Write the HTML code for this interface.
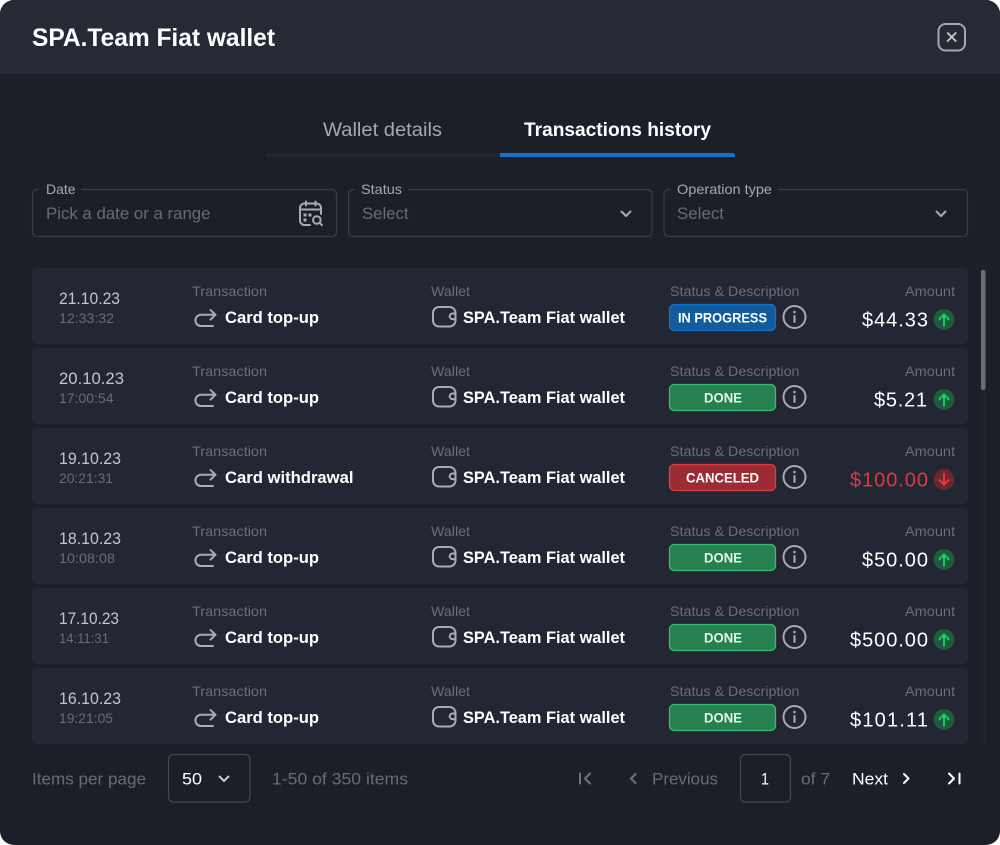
<!DOCTYPE html>
<html lang="en"><head><meta charset="utf-8"><title>SPA.Team Fiat wallet</title>
<style>
html,body{margin:0;padding:0;background:#fff;width:1000px;height:845px;overflow:hidden}
svg{display:block}
text{font-family:"Liberation Sans",sans-serif;font-size:16px}
.b{font-weight:700}
.lab{font-size:14px;fill:#6b6e77}
.date{font-size:16.5px;fill:#c3c5ca}
.time{font-size:14px;fill:#696c75}
.main{font-size:17px;font-weight:700;fill:#fff}
.badge{font-size:14px;font-weight:700;fill:#fff}
.amt{font-size:20px;fill:#fff}
.ph{font-size:17px;fill:#686b74}
.fl{font-size:14px;fill:#a5a8af}
.ft{font-size:17px;fill:#686b74}
.ic{fill:none;stroke:#a8abb2;stroke-width:2;stroke-linecap:round;stroke-linejoin:round}
</style></head><body>
<svg width="1000" height="845" viewBox="0 0 1000 845" xmlns="http://www.w3.org/2000/svg">
<defs>
<g id="tr"><path class="ic" d="M213 326H201a5.5 5.500 0 0 1 0-11.200H215.500M210.500 310l5 4.800-5 4.800"/></g>
<g id="wa"><rect class="ic" x="433" y="307" width="22.500" height="19.500" rx="6"/><path class="ic" d="M455.500 313.500h-3a2.800 2.800 0 0 0 0 5.600h3"/></g>
<g id="inf"><circle class="ic" cx="794.500" cy="317" r="11"/><circle cx="794.500" cy="312" r="1.300" fill="#a8abb2"/><path class="ic" d="M794.500 316v6"/></g>
<g id="up"><circle cx="944" cy="319.500" r="10.500" fill="#1f5b3e"/><path d="M944 325.500v-11M939.500 319l4.500-4.500 4.500 4.500" fill="none" stroke="#22c565" stroke-width="2" stroke-linecap="round" stroke-linejoin="round"/></g>
<g id="dn"><circle cx="944" cy="319.500" r="10.500" fill="#6b2630"/><path d="M944 313.500v11M939.500 320l4.500 4.500 4.500-4.500" fill="none" stroke="#e5383f" stroke-width="2" stroke-linecap="round" stroke-linejoin="round"/></g>
</defs>
<path d="M14 0H986A14 14 0 0 1 1000 14V831A14 14 0 0 1 986 845H14A14 14 0 0 1 0 831V14A14 14 0 0 1 14 0Z" fill="#1c1f27"/>
<path d="M14 0H986A14 14 0 0 1 1000 14V74H0V14A14 14 0 0 1 14 0Z" fill="#252a35"/>
<text x="32" y="46" class="b" style="font-size:25px" fill="#fff" textLength="243" lengthAdjust="spacingAndGlyphs">SPA.Team Fiat wallet</text>
<rect x="938.500" y="24" width="26.500" height="26.500" rx="7" fill="none" stroke="#a3a6ae" stroke-width="2"/>
<path d="M947.700 33l8 8M955.700 33l-8 8" stroke="#c6c8cd" stroke-width="1.800" stroke-linecap="round"/>

<text x="323" y="136" style="font-size:19px" fill="#a5a8ae" textLength="119" lengthAdjust="spacingAndGlyphs">Wallet details</text>
<text x="524" y="136" class="b" style="font-size:19px" fill="#fff" textLength="187" lengthAdjust="spacingAndGlyphs">Transactions history</text>
<path d="M268 153H500V157H266Q266 153 268 153Z" fill="#22262f"/>
<path d="M500 153H733Q735 153 735 157H500Z" fill="#1272cc"/>

<g fill="none" stroke="#3a3e48" stroke-width="1.200">
<path d="M39 189.500H37A4.500 4.500 0 0 0 32.500 194V232A4.500 4.500 0 0 0 37 236.500H332A4.500 4.500 0 0 0 336.500 232V194A4.500 4.500 0 0 0 332 189.500H81"/>
<path d="M355 189.500H353A4.500 4.500 0 0 0 348.500 194V232A4.500 4.500 0 0 0 353 236.500H647.500A4.500 4.500 0 0 0 652 232V194A4.500 4.500 0 0 0 647.500 189.500H408"/>
<path d="M671 189.500H668.500A4.500 4.500 0 0 0 664 194V232A4.500 4.500 0 0 0 668.500 236.500H963A4.500 4.500 0 0 0 967.500 232V194A4.500 4.500 0 0 0 963 189.500H778"/>
</g>
<text x="46" y="194" class="fl" textLength="29.500" lengthAdjust="spacingAndGlyphs">Date</text>
<text x="361" y="194" class="fl" textLength="41" lengthAdjust="spacingAndGlyphs">Status</text>
<text x="677" y="194" class="fl" textLength="95" lengthAdjust="spacingAndGlyphs">Operation type</text>
<text x="46" y="219" class="ph" textLength="164.500" lengthAdjust="spacingAndGlyphs">Pick a date or a range</text>
<text x="362" y="219" class="ph" textLength="46.500" lengthAdjust="spacingAndGlyphs">Select</text>
<text x="677" y="219" class="ph" textLength="47" lengthAdjust="spacingAndGlyphs">Select</text>
<path class="ic" d="M621.500 211.500l4.500 4.500 4.500-4.500M936.500 211.500l4.500 4.500 4.500-4.500"/>
<path class="ic" d="M310 225h-5.500a4.500 4.500 0 0 1-4.500-4.500v-12.500a4.500 4.500 0 0 1 4.500-4.500h12a4.500 4.500 0 0 1 4.500 4.500v6M306 201.500v4M315.500 201.500v4M300 209.500h21"/>
<path d="M303.500 213.500h3v3h-3zM303.500 218.500h3v3h-3zM308.500 213.500h3v3h-3z" fill="#a8abb2"/>
<circle class="ic" cx="316.800" cy="220" r="3.800"/><path class="ic" d="M319.600 222.800l2.400 2.400"/>

<rect x="980.500" y="268" width="5.500" height="476" rx="2.500" fill="#20232c"/>
<rect x="981" y="270" width="4.500" height="120" rx="2" fill="#6a6d76"/>

<!-- rows -->
<rect x="32" y="268" width="936" height="76" rx="6" fill="#232733"/>
<rect x="32" y="348" width="936" height="76" rx="6" fill="#232733"/>
<rect x="32" y="428" width="936" height="76" rx="6" fill="#232733"/>
<rect x="32" y="508" width="936" height="76" rx="6" fill="#232733"/>
<rect x="32" y="588" width="936" height="76" rx="6" fill="#232733"/>
<rect x="32" y="668" width="936" height="76" rx="6" fill="#232733"/>

<!-- row 1 -->
<text x="59" y="304" class="date" textLength="61" lengthAdjust="spacingAndGlyphs">21.10.23</text>
<text x="59" y="323" class="time" textLength="55" lengthAdjust="spacingAndGlyphs">12:33:32</text>
<text x="192" y="296" class="lab" textLength="75" lengthAdjust="spacingAndGlyphs">Transaction</text>
<use href="#tr"/>
<text x="225" y="323" class="main" textLength="94" lengthAdjust="spacingAndGlyphs">Card top-up</text>
<text x="431" y="296" class="lab" textLength="39" lengthAdjust="spacingAndGlyphs">Wallet</text>
<use href="#wa"/>
<text x="463" y="323" class="main" textLength="162" lengthAdjust="spacingAndGlyphs">SPA.Team Fiat wallet</text>
<text x="670" y="296" class="lab" textLength="129.500" lengthAdjust="spacingAndGlyphs">Status &amp; Description</text>
<rect x="669.500" y="304.500" width="106" height="26" rx="5" fill="#125c9c" stroke="#1272cc" stroke-width="1.300"/>
<text x="678" y="322.500" class="badge" textLength="89" lengthAdjust="spacingAndGlyphs">IN PROGRESS</text>
<use href="#inf"/>
<text x="905" y="296" class="lab" textLength="50" lengthAdjust="spacingAndGlyphs">Amount</text>
<text x="862" y="326.500" class="amt" textLength="66" lengthAdjust="spacing">$44.33</text>
<use href="#up"/>

<!-- row 2 -->
<text x="59" y="384" class="date" textLength="65" lengthAdjust="spacingAndGlyphs">20.10.23</text>
<text x="59" y="403" class="time" textLength="54.500" lengthAdjust="spacingAndGlyphs">17:00:54</text>
<text x="192" y="376" class="lab" textLength="75" lengthAdjust="spacingAndGlyphs">Transaction</text>
<use href="#tr" y="80"/>
<text x="225" y="403" class="main" textLength="94" lengthAdjust="spacingAndGlyphs">Card top-up</text>
<text x="431" y="376" class="lab" textLength="39" lengthAdjust="spacingAndGlyphs">Wallet</text>
<use href="#wa" y="80"/>
<text x="463" y="403" class="main" textLength="162" lengthAdjust="spacingAndGlyphs">SPA.Team Fiat wallet</text>
<text x="670" y="376" class="lab" textLength="129.500" lengthAdjust="spacingAndGlyphs">Status &amp; Description</text>
<rect x="669.500" y="384.500" width="106" height="26" rx="5" fill="#278050" stroke="#36bd72" stroke-width="1.300"/>
<text x="704" y="402.500" class="badge" style="fill:#e6f3ea" textLength="38" lengthAdjust="spacingAndGlyphs">DONE</text>
<use href="#inf" y="80"/>
<text x="905" y="376" class="lab" textLength="50" lengthAdjust="spacingAndGlyphs">Amount</text>
<text x="874" y="406.500" class="amt" textLength="53" lengthAdjust="spacing">$5.21</text>
<use href="#up" y="80"/>

<!-- row 3 -->
<text x="59" y="464" class="date" textLength="62" lengthAdjust="spacingAndGlyphs">19.10.23</text>
<text x="59" y="483" class="time" textLength="54" lengthAdjust="spacingAndGlyphs">20:21:31</text>
<text x="192" y="456" class="lab" textLength="75" lengthAdjust="spacingAndGlyphs">Transaction</text>
<use href="#tr" y="160"/>
<text x="225" y="483" class="main" textLength="128.500" lengthAdjust="spacingAndGlyphs">Card withdrawal</text>
<text x="431" y="456" class="lab" textLength="39" lengthAdjust="spacingAndGlyphs">Wallet</text>
<use href="#wa" y="160"/>
<text x="463" y="483" class="main" textLength="162" lengthAdjust="spacingAndGlyphs">SPA.Team Fiat wallet</text>
<text x="670" y="456" class="lab" textLength="129.500" lengthAdjust="spacingAndGlyphs">Status &amp; Description</text>
<rect x="669.500" y="464.500" width="106" height="26" rx="5" fill="#9b2c33" stroke="#d83f45" stroke-width="1.300"/>
<text x="686" y="482.500" class="badge" textLength="73" lengthAdjust="spacingAndGlyphs">CANCELED</text>
<use href="#inf" y="160"/>
<text x="905" y="456" class="lab" textLength="50" lengthAdjust="spacingAndGlyphs">Amount</text>
<text x="850" y="486.500" class="amt" style="fill:#dc3a3f" textLength="78" lengthAdjust="spacing">$100.00</text>
<use href="#dn" y="160"/>

<!-- row 4 -->
<text x="59" y="544" class="date" textLength="62" lengthAdjust="spacingAndGlyphs">18.10.23</text>
<text x="59" y="563" class="time" textLength="56" lengthAdjust="spacingAndGlyphs">10:08:08</text>
<text x="192" y="536" class="lab" textLength="75" lengthAdjust="spacingAndGlyphs">Transaction</text>
<use href="#tr" y="240"/>
<text x="225" y="563" class="main" textLength="94" lengthAdjust="spacingAndGlyphs">Card top-up</text>
<text x="431" y="536" class="lab" textLength="39" lengthAdjust="spacingAndGlyphs">Wallet</text>
<use href="#wa" y="240"/>
<text x="463" y="563" class="main" textLength="162" lengthAdjust="spacingAndGlyphs">SPA.Team Fiat wallet</text>
<text x="670" y="536" class="lab" textLength="129.500" lengthAdjust="spacingAndGlyphs">Status &amp; Description</text>
<rect x="669.500" y="544.500" width="106" height="26" rx="5" fill="#278050" stroke="#36bd72" stroke-width="1.300"/>
<text x="704" y="562.500" class="badge" style="fill:#e6f3ea" textLength="38" lengthAdjust="spacingAndGlyphs">DONE</text>
<use href="#inf" y="240"/>
<text x="905" y="536" class="lab" textLength="50" lengthAdjust="spacingAndGlyphs">Amount</text>
<text x="862" y="566.500" class="amt" textLength="66" lengthAdjust="spacing">$50.00</text>
<use href="#up" y="240"/>

<!-- row 5 -->
<text x="59" y="624" class="date" textLength="60" lengthAdjust="spacingAndGlyphs">17.10.23</text>
<text x="59" y="643" class="time" textLength="50" lengthAdjust="spacingAndGlyphs">14:11:31</text>
<text x="192" y="616" class="lab" textLength="75" lengthAdjust="spacingAndGlyphs">Transaction</text>
<use href="#tr" y="320"/>
<text x="225" y="643" class="main" textLength="94" lengthAdjust="spacingAndGlyphs">Card top-up</text>
<text x="431" y="616" class="lab" textLength="39" lengthAdjust="spacingAndGlyphs">Wallet</text>
<use href="#wa" y="320"/>
<text x="463" y="643" class="main" textLength="162" lengthAdjust="spacingAndGlyphs">SPA.Team Fiat wallet</text>
<text x="670" y="616" class="lab" textLength="129.500" lengthAdjust="spacingAndGlyphs">Status &amp; Description</text>
<rect x="669.500" y="624.500" width="106" height="26" rx="5" fill="#278050" stroke="#36bd72" stroke-width="1.300"/>
<text x="704" y="642.500" class="badge" style="fill:#e6f3ea" textLength="38" lengthAdjust="spacingAndGlyphs">DONE</text>
<use href="#inf" y="320"/>
<text x="905" y="616" class="lab" textLength="50" lengthAdjust="spacingAndGlyphs">Amount</text>
<text x="850" y="646.500" class="amt" textLength="78" lengthAdjust="spacing">$500.00</text>
<use href="#up" y="320"/>

<!-- row 6 -->
<text x="59" y="704" class="date" textLength="62" lengthAdjust="spacingAndGlyphs">16.10.23</text>
<text x="59" y="723" class="time" textLength="54" lengthAdjust="spacingAndGlyphs">19:21:05</text>
<text x="192" y="696" class="lab" textLength="75" lengthAdjust="spacingAndGlyphs">Transaction</text>
<use href="#tr" y="400"/>
<text x="225" y="723" class="main" textLength="94" lengthAdjust="spacingAndGlyphs">Card top-up</text>
<text x="431" y="696" class="lab" textLength="39" lengthAdjust="spacingAndGlyphs">Wallet</text>
<use href="#wa" y="400"/>
<text x="463" y="723" class="main" textLength="162" lengthAdjust="spacingAndGlyphs">SPA.Team Fiat wallet</text>
<text x="670" y="696" class="lab" textLength="129.500" lengthAdjust="spacingAndGlyphs">Status &amp; Description</text>
<rect x="669.500" y="704.500" width="106" height="26" rx="5" fill="#278050" stroke="#36bd72" stroke-width="1.300"/>
<text x="704" y="722.500" class="badge" style="fill:#e6f3ea" textLength="38" lengthAdjust="spacingAndGlyphs">DONE</text>
<use href="#inf" y="400"/>
<text x="905" y="696" class="lab" textLength="50" lengthAdjust="spacingAndGlyphs">Amount</text>
<text x="850" y="726.500" class="amt" textLength="78" lengthAdjust="spacing">$101.11</text>
<use href="#up" y="400"/>

<!-- footer -->
<text x="32" y="784.500" class="ft" textLength="114" lengthAdjust="spacingAndGlyphs">Items per page</text>
<rect x="168.500" y="754.500" width="81.500" height="47.500" rx="5" fill="none" stroke="#454852" stroke-width="1.200"/>
<text x="182" y="784.500" class="ft" style="fill:#fff" textLength="20" lengthAdjust="spacingAndGlyphs">50</text>
<path d="M219.500 776.500l4.500 4.500 4.500-4.500" fill="none" stroke="#c6c8cd" stroke-width="2" stroke-linecap="round" stroke-linejoin="round"/>
<text x="272" y="784.500" class="ft" textLength="136" lengthAdjust="spacingAndGlyphs">1-50 of 350 items</text>
<path d="M580 773.500v10M590 773.500l-5 5 5 5M635.500 774l-4.500 4.500 4.500 4.500" fill="none" stroke="#6f727a" stroke-width="2" stroke-linecap="round" stroke-linejoin="round"/>
<text x="652" y="784.500" class="ft" textLength="66" lengthAdjust="spacingAndGlyphs">Previous</text>
<rect x="740.500" y="754.500" width="50" height="47.500" rx="5" fill="none" stroke="#454852" stroke-width="1.200"/>
<text x="761" y="784.500" class="ft" style="fill:#fff" textLength="8" lengthAdjust="spacingAndGlyphs">1</text>
<text x="801" y="784.500" class="ft" textLength="29" lengthAdjust="spacingAndGlyphs">of 7</text>
<text x="852" y="784.500" class="ft" style="fill:#fff" textLength="36" lengthAdjust="spacingAndGlyphs">Next</text>
<path d="M904 774l4.500 4.500-4.500 4.500M949 773.500l5 5-5 5M959.500 773.500v10" fill="none" stroke="#fff" stroke-width="2" stroke-linecap="round" stroke-linejoin="round"/>
</svg>
</body></html>
